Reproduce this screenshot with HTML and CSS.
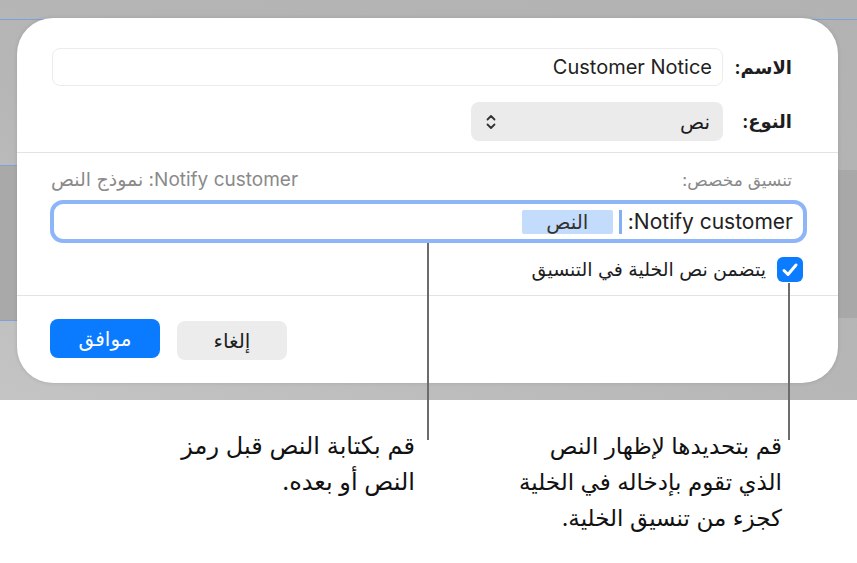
FILE: index.html
```
<!DOCTYPE html>
<html lang="ar" dir="rtl">
<head>
  <meta charset="UTF-8">
  <meta name="viewport" content="width=device-width, initial-scale=1.0">
  <title>تنسيق مخصص</title>
  <link rel="stylesheet" href="styles.css">
</head>
<body>
  <div class="page">
    <div class="screen">
      <div class="dialog">
        <div class="dialog-top">
          <div class="row">
            <label class="row-label" for="name">الاسم:</label>
            <div class="name-field" id="name" dir="ltr">Customer Notice</div>
          </div>
          <div class="row">
            <label class="row-label">النوع:</label>
            <div class="popup">
              <span>نص</span>
              <svg class="popup-arrows" width="10" height="16" viewBox="0 0 10 16">
                <path d="M1.5 5.5 L5 2 L8.5 5.5 M1.5 10.5 L5 14 L8.5 10.5" fill="none" stroke="#333" stroke-width="1.8" stroke-linecap="round" stroke-linejoin="round"/>
              </svg>
            </div>
          </div>
        </div>

        <div class="dialog-mid">
          <div class="format-head">
            <span class="head-title">تنسيق مخصص:</span>
            <span class="head-sample">Notify customer: نموذج النص</span>
          </div>
          <div class="format-field">
            <span class="format-text">Notify customer:</span>
            <span class="caret"></span>
            <span class="token">النص</span>
          </div>
          <label class="check-row">
            <span class="checkbox">
              <svg width="18" height="16" viewBox="0 0 18 16">
                <path d="M3 8.5 L7 12.5 L15 3" fill="none" stroke="#fff" stroke-width="3" stroke-linecap="round" stroke-linejoin="round"/>
              </svg>
            </span>
            يتضمن نص الخلية في التنسيق
          </label>
        </div>

        <div class="dialog-foot">
          <button class="btn">إلغاء</button>
          <button class="btn btn-primary">موافق</button>
        </div>
      </div>
    </div>

    <div class="notes">
      <p class="note note-check">قم بتحديدها لإظهار النص<br>الذي تقوم بإدخاله في الخلية<br>كجزء من تنسيق الخلية.</p>
      <p class="note note-token">قم بكتابة النص قبل رمز<br>النص أو بعده.</p>
    </div>

    <!-- callout leader lines -->
    <div class="leader leader-token"></div>
    <div class="leader leader-check"></div>
  </div>
</body>
</html>
```

FILE: styles.css
```
* {
  box-sizing: border-box;
}

body {
  margin: 0;
  background: #fff;
  font-family: Inter, "DejaVu Sans", sans-serif;
  color: #1d1d1f;
}

.page {
  position: relative;
  width: 857px;
  height: 563px;
  overflow: hidden;
}

.screen {
  height: 400px;
  padding: 18px 19px 0 17px;
  background:
    linear-gradient(#7ea2d8, #7ea2d8) 0 19px / 100% 1px no-repeat,
    linear-gradient(#7ea2d8, #7ea2d8) 0 165px / 17px 1px no-repeat,
    linear-gradient(#7ea2d8, #7ea2d8) 0 320px / 17px 1px no-repeat,
    linear-gradient(#a9a9a9, #a9a9a9) 0 165px / 17px 155px no-repeat,
    linear-gradient(#a8a8a8, #a8a8a8) right 170px / 19px 148px no-repeat,
    linear-gradient(200deg, #b2b2b2 0%, #b6b6b6 55%, #c4c4c4 100%);
}

.dialog {
  width: 821px;
  height: 365px;
  background: #fff;
  border-radius: 36px;
  box-shadow: 0 0 4px rgba(0, 0, 0, 0.12);
  display: flex;
  flex-direction: column;
}

.dialog-top {
  padding: 30px 46px 0 35px;
  height: 135px;
  border-bottom: 1px solid #e3e3e3;
  display: flex;
  flex-direction: column;
  gap: 16px;
}

.row {
  display: flex;
  align-items: center;
  gap: 12px;
}

.row-label {
  width: 57px;
  font-weight: bold;
  font-size: 18px;
}

.name-field {
  width: 671px;
  height: 38px;
  border: 1px solid #ececec;
  border-radius: 8px;
  padding: 0 10px;
  font-size: 20px;
  line-height: 36px;
  text-align: right;
  color: #222;
}

.popup {
  width: 252px;
  height: 39px;
  background: #ebebeb;
  border-radius: 8px;
  display: flex;
  align-items: center;
  justify-content: space-between;
  padding: 0 13px 0 15px;
  font-size: 20px;
}

.popup-arrows {
  display: block;
}

.dialog-mid {
  height: 143px;
  border-bottom: 1px solid #e3e3e3;
  padding: 16px 46px 0 34px;
}

.format-head {
  display: flex;
  justify-content: space-between;
  align-items: baseline;
  color: #8a8a8a;
  line-height: 22px;
}

.head-title {
  font-size: 17px;
}

.head-sample {
  font-size: 19px;
}

.format-field {
  margin: 9px -15px 0 0;
  width: 757px;
  height: 43px;
  border: 4px solid #8db5f8;
  border-radius: 13px;
  display: flex;
  align-items: center;
  padding: 0 10px;
  font-size: 21px;
}

.format-text {
  color: #222;
}

.caret {
  width: 3px;
  height: 24px;
  background: #84aff6;
  margin: 0 6px 0 6px;
}

.token {
  width: 91px;
  height: 24px;
  background: #c3dcfc;
  border-radius: 2px;
  text-align: center;
  font-size: 20px;
  line-height: 24px;
  color: #333;
}

.check-row {
  display: flex;
  align-items: center;
  gap: 11px;
  margin: 14px -11px 0 0;
  font-size: 19px;
}

.checkbox {
  width: 26px;
  height: 25px;
  border-radius: 6px;
  background: #0b7bff;
  display: flex;
  align-items: center;
  justify-content: center;
}

.dialog-foot {
  flex: 1;
  display: flex;
  justify-content: flex-end;
  align-items: flex-start;
  gap: 17px;
  padding: 23px 33px 0 33px;
}

.btn {
  width: 110px;
  height: 39px;
  border: none;
  border-radius: 8px;
  background: #ececec;
  color: #1d1d1f;
  font-family: inherit;
  font-size: 20px;
  margin-top: 2px;
}

.btn-primary {
  background: #0a7bff;
  color: #fff;
  margin-top: 0;
}

.notes {
  display: flex;
  gap: 67px;
  padding: 28px 75px 0 0;
}

.note {
  margin: 0;
  width: 300px;
  font-size: 24px;
  line-height: 36px;
  white-space: nowrap;
  color: #111;
}

.note-check {
  font-size: 23px;
}

.note-token {
  width: 260px;
}

.leader {
  position: absolute;
  width: 2px;
  background: #6c6c6c;
}

.leader-token {
  left: 427px;
  top: 243px;
  height: 197px;
}

.leader-check {
  left: 788px;
  top: 283px;
  height: 157px;
}
```
